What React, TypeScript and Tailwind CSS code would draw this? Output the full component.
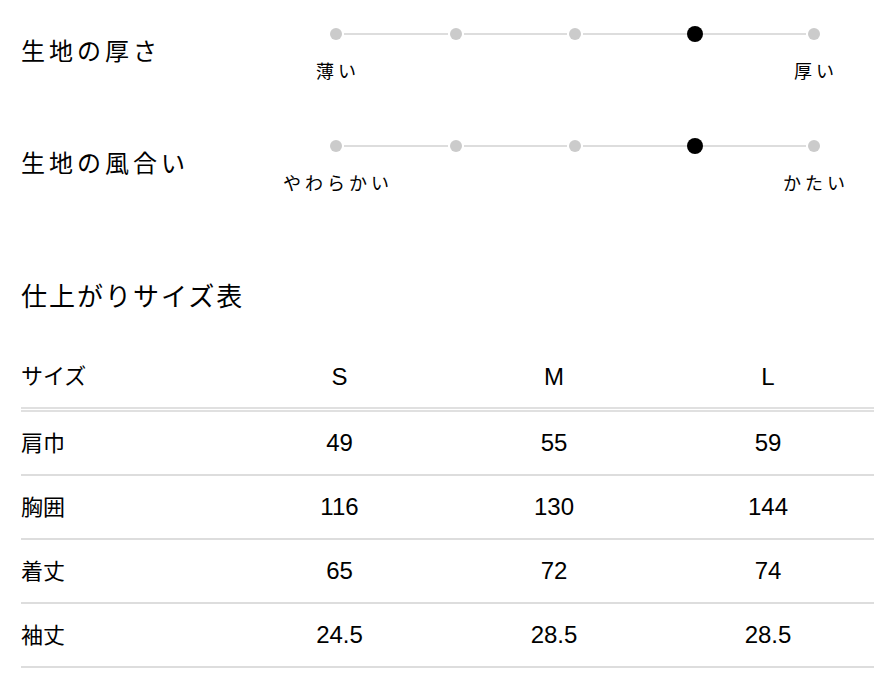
const sliders = [
  { title: "生地の厚さ", left: "薄い", right: "厚い", value: 3 },
  { title: "生地の風合い", left: "やわらかい", right: "かたい", value: 3 },
];

const sizes = ["S", "M", "L"];

const rows = [
  { label: "肩巾", values: ["49", "55", "59"] },
  { label: "胸囲", values: ["116", "130", "144"] },
  { label: "着丈", values: ["65", "72", "74"] },
  { label: "袖丈", values: ["24.5", "28.5", "28.5"] },
];

function Dot({ active }: { active: boolean }) {
  return (
    <div className="w-4 h-4 flex items-center justify-center shrink-0">
      {active ? (
        <div className="w-4 h-4 rounded-full bg-black" />
      ) : (
        <div className="w-3 h-3 rounded-full bg-[#cbcbcb]" />
      )}
    </div>
  );
}

function Scale({ title, left, right, value }: { title: string; left: string; right: string; value: number }) {
  const steps = [0, 1, 2, 3, 4];
  return (
    <div className="flex">
      <h3 className="w-[307px] shrink-0 mt-[10px] text-[24px] leading-[32px] tracking-[4px]">{title}</h3>
      <div className="w-[494px]">
        <div className="flex items-center h-4">
          {steps.map((i) => (
            <div key={i} className={i === 0 ? "flex items-center" : "flex items-center flex-1"}>
              {i > 0 && <div className="flex-1 h-[2px] bg-[#dddddd]" />}
              <Dot active={i === value} />
            </div>
          ))}
        </div>
        <div className="flex justify-between mt-[18px] text-[18px] leading-[24px] tracking-[4px]">
          <div className="w-4 flex justify-center whitespace-nowrap pl-[4px]">{left}</div>
          <div className="w-4 flex justify-center whitespace-nowrap pl-[4px]">{right}</div>
        </div>
      </div>
    </div>
  );
}

export default function App() {
  return (
    <div className="w-[884px] h-[682px] bg-white text-black pl-[21px] pr-[10px] pt-[26px] font-['Liberation_Sans','Noto_Sans_CJK_JP',sans-serif]">
      <div className="flex flex-col gap-[54px]">
        {sliders.map((s) => (
          <Scale key={s.title} {...s} />
        ))}
      </div>

      <h2 className="mt-[83px] text-[26px] leading-[36px] tracking-[2px]">仕上がりサイズ表</h2>

      <div className="mt-[31px]">
        <div className="grid grid-cols-[212px_213px_216px_212px] items-center h-[66px] border-b-[5px] border-double border-[#e0e0e0]">
          <div className="text-[22px]">サイズ</div>
          {sizes.map((s) => (
            <div key={s} className="text-center text-[24px]">{s}</div>
          ))}
        </div>
        {rows.map((r) => (
          <div key={r.label} className="grid grid-cols-[212px_213px_216px_212px] items-center h-[64px] border-b-2 border-[#dddddd]">
            <div className="text-[22px]">{r.label}</div>
            {r.values.map((v, i) => (
              <div key={i} className="text-center text-[24px]">{v}</div>
            ))}
          </div>
        ))}
      </div>
    </div>
  );
}
